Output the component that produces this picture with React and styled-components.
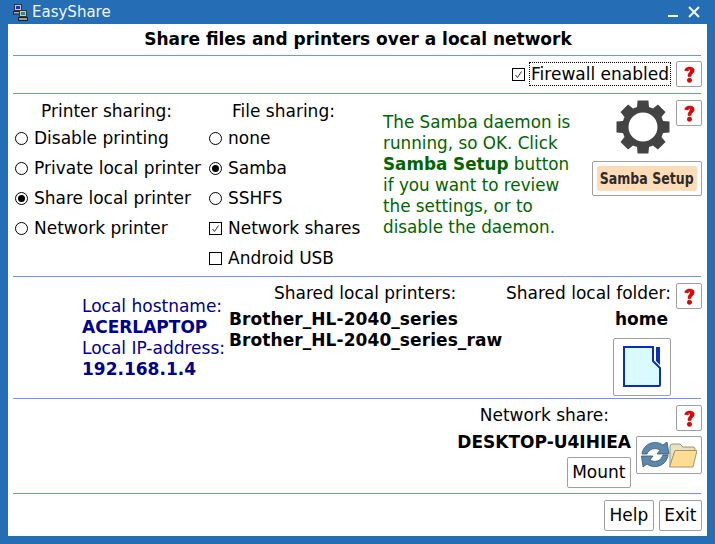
import React from "react";
import styled, { createGlobalStyle } from "styled-components";

const GlobalStyle = createGlobalStyle`
  html, body {
    margin: 0;
    padding: 0;
    background: #256db5;
  }
  body {
    font-family: "DejaVu Sans", sans-serif;
    font-size: 17px;
    color: #000000;
  }
`;

const Window = styled.div`
  width: 715px;
  height: 544px;
  display: flex;
  flex-direction: column;
  background: #256db5;
  overflow: hidden;
`;

const TitleBar = styled.header`
  height: 24px;
  flex: none;
  display: flex;
  align-items: center;
  padding: 0 15px 0 13px;
  color: #f2f6fb;
  font-size: 15px;
`;

const TitleText = styled.span`
  margin-left: 4px;
  flex: 1;
`;

const WindowControls = styled.div`
  display: flex;
  align-items: center;
  gap: 10px;
`;

const Client = styled.main`
  flex: 1;
  margin: 0 8px 8px;
  background: #ffffff;
  padding: 0 6px 0 5px;
  display: flex;
  flex-direction: column;
`;

const Section = styled.section`
  height: ${(p) => p.$height}px;
  flex: none;
  box-sizing: border-box;
  border-bottom: ${(p) => (p.$last ? "none" : "1px solid #7492e8")};
`;

const Heading = styled(Section)`
  display: flex;
  justify-content: center;
  align-items: center;
  font-weight: bold;
  padding: 0 0 2px 2px;
`;

const FirewallRow = styled(Section)`
  display: flex;
  justify-content: flex-end;
  align-items: center;
  padding-bottom: 1px;
`;

const FocusLabel = styled.span`
  border: 1px dotted #000000;
  height: 24px;
  line-height: 22px;
  padding: 0 1px 0 1px;
  margin: 0 5px 0 4px;
  box-sizing: border-box;
  white-space: nowrap;
`;

const HelpButton = styled.button`
  width: 26px;
  height: 26px;
  padding: 0;
  flex: none;
  background: #ffffff;
  border: 1px solid #a0a0a0;
  border-radius: 2px;
  display: flex;
  align-items: center;
  justify-content: center;
`;

const FirewallHelp = styled(HelpButton)`
  margin-right: -1px;
`;

const TextButton = styled.button`
  height: 31px;
  padding: 0 4.5px;
  background: #ffffff;
  border: 1px solid #a0a0a0;
  border-radius: 2px;
  font-family: "DejaVu Sans", sans-serif;
  font-size: 17px;
  color: #000000;
  line-height: 1;
`;

const SharingGrid = styled(Section)`
  display: grid;
  grid-template-columns: 194px 176px 209px 110px;
  padding-top: 6px;
`;

const OptionColumn = styled.div`
  display: flex;
  flex-direction: column;
`;

const ColumnTitle = styled.div`
  height: 23px;
  line-height: 22px;
  padding-left: ${(p) => p.$indent}px;
`;

const OptionRow = styled.label`
  height: 30px;
  display: flex;
  align-items: center;
  gap: 6px;
  white-space: nowrap;
  padding-left: 2px;
`;

const RadioMark = styled.span`
  width: 13px;
  height: 13px;
  flex: none;
  box-sizing: border-box;
  border: 1px solid #000000;
  border-radius: 50%;
  display: flex;
  align-items: center;
  justify-content: center;
  &::after {
    content: "";
    width: 7px;
    height: 7px;
    border-radius: 50%;
    background: ${(p) => (p.$on ? "#000000" : "transparent")};
  }
`;

const CheckMark = styled.span`
  width: 13px;
  height: 13px;
  flex: none;
  box-sizing: border-box;
  border: 1px solid #000000;
  display: flex;
  align-items: center;
  justify-content: center;
`;

const Message = styled.p`
  margin: 12px 0 0;
  color: #006400;
  line-height: 21px;
  font-size: 16.8px;
  white-space: nowrap;
`;

const SetupColumn = styled.div`
  position: relative;
  display: flex;
  flex-direction: column;
  align-items: flex-start;
`;

const GearSlot = styled.div`
  margin-left: 24px;
  height: 61px;
`;

const SetupButton = styled.button`
  width: 110px;
  height: 35px;
  padding: 0;
  background: #ffffff;
  border: 1px solid #a0a0a0;
  border-radius: 2px;
  display: flex;
  align-items: center;
  justify-content: center;
`;

const SetupLabel = styled.span`
  width: 100px;
  height: 25px;
  background: #ffdcb8;
  border-radius: 2px;
  display: flex;
  align-items: center;
  justify-content: center;
`;

const SetupText = styled.span`
  display: inline-block;
  color: #2b2b2b;
  font-family: "DejaVu Sans", sans-serif;
  font-weight: bold;
  font-size: 16.5px;
  white-space: nowrap;
  transform: scaleX(0.76);
`;

const CornerHelp = styled.div`
  position: absolute;
  top: 0;
  right: 0;
`;

const HostGrid = styled(Section)`
  display: grid;
  grid-template-columns: 216px 1fr auto;
  padding-top: 6px;
`;

const HostInfo = styled.div`
  padding: 13px 0 0 69px;
  color: #00008b;
  line-height: 21px;
  white-space: nowrap;
`;

const HostValue = styled.div`
  font-weight: bold;
`;

const PrinterList = styled.div`
  display: flex;
  flex-direction: column;
`;

const PrinterTitle = styled.div`
  height: 26px;
  line-height: 20px;
  padding-left: 45px;
`;

const PrinterName = styled.div`
  font-weight: bold;
  line-height: 21px;
  letter-spacing: 0.08px;
  white-space: nowrap;
`;

const FolderColumn = styled.div`
  display: grid;
  grid-template-columns: auto 26px;
  grid-template-rows: 26px auto auto;
  column-gap: 5px;
  justify-items: end;
  margin-right: -1px;
`;

const FolderTitle = styled.div`
  line-height: 20px;
  white-space: nowrap;
`;

const FolderName = styled.div`
  grid-column: 1;
  font-weight: bold;
  line-height: 20px;
  margin-right: 3px;
`;

const IconButton = styled.button`
  width: ${(p) => p.$w}px;
  height: ${(p) => p.$h}px;
  padding: 0;
  flex: none;
  background: #ffffff;
  border: 1px solid #a0a0a0;
  border-radius: 2px;
  display: flex;
  align-items: center;
  justify-content: center;
`;

const FolderButtonSlot = styled.div`
  grid-column: 1 / 3;
  justify-self: start;
  margin: 6px 0 0 107px;
`;

const ShareSection = styled(Section)`
  display: flex;
  justify-content: flex-end;
  padding-top: 6px;
`;

const ShareColumn = styled.div`
  display: flex;
  flex-direction: column;
  align-items: flex-end;
  margin-right: 5px;
`;

const ShareTitle = styled.div`
  line-height: 22px;
  margin: -1px 22px 0 0;
`;

const ShareHost = styled.div`
  font-weight: bold;
  line-height: 20px;
  margin-top: 6px;
`;

const MountSlot = styled.div`
  margin-top: 5px;
`;

const ShareActions = styled.div`
  display: flex;
  flex-direction: column;
  align-items: flex-end;
  gap: 5px;
  margin-right: -1px;
`;

const Footer = styled(Section)`
  display: flex;
  justify-content: flex-end;
  gap: 5px;
  padding-top: 6px;
  margin-right: -1px;
`;

const AppIcon = () => (
  <svg width="15" height="17" viewBox="0 0 15 17">
    <rect x="1.5" y="0.5" width="7" height="6" fill="#c8c8c8" stroke="#333" />
    <rect x="3" y="2" width="4" height="3" fill="#1c2fe0" />
    <rect x="0.5" y="7.5" width="9" height="2.5" fill="#aaa" stroke="#222" />
    <rect x="6.5" y="6.5" width="7" height="6" fill="#c8c8c8" stroke="#333" />
    <rect x="8" y="8" width="4" height="3" fill="#0f9a90" />
    <rect x="5.5" y="13.5" width="9" height="3" fill="#999" stroke="#222" />
  </svg>
);

const Question = () => (
  <svg width="11" height="17" viewBox="0 0 11 17">
    <path
      d="M0.8 4.6 C0.8 0.2 10.2 -0.4 10.2 4.4 C10.2 7.2 7 7.6 7 10.6 L4 10.6 C3.6 7.2 6.2 6.6 6.2 4.6 C6.2 3.2 4.3 3.2 4.3 5 Z"
      fill="#f00000"
      stroke="#7a0000"
      strokeWidth="0.5"
    />
    <circle cx="5.5" cy="14.2" r="2.2" fill="#f00000" stroke="#7a0000" strokeWidth="0.5" />
  </svg>
);

const Tick = () => (
  <svg width="9" height="9" viewBox="0 0 9 9">
    <path d="M1.5 5 L3.5 7.5 L7.5 1.5" fill="none" stroke="#333" strokeWidth="1" />
  </svg>
);

const gearPath = (() => {
  const cx = 27;
  const cy = 27;
  const teeth = 8;
  const pts = [];
  for (let i = 0; i < teeth; i++) {
    const a = (i * 2 * Math.PI) / teeth - Math.PI / 2;
    const w = 0.2;
    pts.push([a - w * 1.45, 21], [a - w, 27], [a + w, 27], [a + w * 1.45, 21]);
  }
  const d = pts
    .map(([a, r], i) => `${i ? "L" : "M"}${(cx + r * Math.cos(a)).toFixed(1)} ${(cy + r * Math.sin(a)).toFixed(1)}`)
    .join(" ");
  return `${d} Z`;
})();

const Gear = () => (
  <svg width="54" height="54" viewBox="0 0 54 54">
    <path
      d={`${gearPath} M27 12.5 A14.5 14.5 0 1 0 27 41.5 A14.5 14.5 0 1 0 27 12.5 Z`}
      fill="#434343"
      fillRule="evenodd"
    />
  </svg>
);

const FolderIcon = () => (
  <svg width="38" height="41" viewBox="0 0 38 41">
    <path d="M1 1 H30 V15 L37 22 V39 Q37 40 36 40 H1 Z" fill="#d9fbff" stroke="#0a2fc0" strokeWidth="2" />
    <path d="M33 1 H37 V19 L33 15 Z" fill="#0a2fc0" />
  </svg>
);

const MountIcon = () => (
  <svg width="56" height="30" viewBox="0 0 56 30">
    <path d="M29 26 V7 Q29 4 31 4 H39 L42 7 H52 Q54 7 54 9 V11 H34 Z" fill="#e6e0c4" stroke="#9a9470" />
    <path d="M34 10.5 H56 L52 27 H28.5 Z" fill="#ffdc94" stroke="#a89660" />
    <path d="M1 14 C2 4 14 -1 22 5 L26 2 L28 14 L16 14 L19 10 C14 7 8 9 6 14 Z" fill="#5d88ad" stroke="#33566f" strokeWidth="0.8" />
    <path d="M27 15 C26 25 14 30 6 24 L2 27 L0.5 16 L12 16 L9 20 C14 23 20 21 22 15 Z" fill="#5d88ad" stroke="#33566f" strokeWidth="0.8" />
  </svg>
);

const printerOptions = [
  ["Disable printing", false],
  ["Private local printer", false],
  ["Share local printer", true],
  ["Network printer", false],
];

const fileOptions = [
  ["none", "radio", false],
  ["Samba", "radio", true],
  ["SSHFS", "radio", false],
  ["Network shares", "check", true],
  ["Android USB", "check", false],
];

export default function App() {
  return (
    <>
      <GlobalStyle />
      <Window>
        <TitleBar>
          <AppIcon />
          <TitleText>EasyShare</TitleText>
          <WindowControls>
            <svg width="10" height="12" viewBox="0 0 10 12">
              <rect x="0" y="9" width="10" height="2" fill="#f2f6fb" />
            </svg>
            <svg width="12" height="12" viewBox="0 0 12 12">
              <path d="M1 1 L11 11 M11 1 L1 11" stroke="#f2f6fb" strokeWidth="2" />
            </svg>
          </WindowControls>
        </TitleBar>
        <Client>
          <Heading $height={32}>Share files and printers over a local network</Heading>
          <FirewallRow $height={38}>
            <CheckMark>
              <Tick />
            </CheckMark>
            <FocusLabel>Firewall enabled</FocusLabel>
            <FirewallHelp aria-label="help">
              <Question />
            </FirewallHelp>
          </FirewallRow>
          <SharingGrid $height={183}>
            <OptionColumn>
              <ColumnTitle $indent={28}>Printer sharing:</ColumnTitle>
              {printerOptions.map(([label, on]) => (
                <OptionRow key={label}>
                  <RadioMark $on={on} />
                  {label}
                </OptionRow>
              ))}
            </OptionColumn>
            <OptionColumn>
              <ColumnTitle $indent={25}>File sharing:</ColumnTitle>
              {fileOptions.map(([label, kind, on]) => (
                <OptionRow key={label}>
                  {kind === "radio" ? (
                    <RadioMark $on={on} />
                  ) : (
                    <CheckMark>{on && <Tick />}</CheckMark>
                  )}
                  {label}
                </OptionRow>
              ))}
            </OptionColumn>
            <Message>
              The Samba daemon is
              <br />
              running, so OK. Click
              <br />
              <b>Samba Setup</b> button
              <br />
              if you want to review
              <br />
              the settings, or to
              <br />
              disable the daemon.
            </Message>
            <SetupColumn>
              <GearSlot>
                <Gear />
              </GearSlot>
              <SetupButton>
                <SetupLabel>
                  <SetupText>Samba Setup</SetupText>
                </SetupLabel>
              </SetupButton>
              <CornerHelp>
                <HelpButton aria-label="help">
                  <Question />
                </HelpButton>
              </CornerHelp>
            </SetupColumn>
          </SharingGrid>
          <HostGrid $height={122}>
            <HostInfo>
              Local hostname:
              <HostValue>ACERLAPTOP</HostValue>
              Local IP-address:
              <HostValue>192.168.1.4</HostValue>
            </HostInfo>
            <PrinterList>
              <PrinterTitle>Shared local printers:</PrinterTitle>
              <PrinterName>Brother_HL-2040_series</PrinterName>
              <PrinterName>Brother_HL-2040_series_raw</PrinterName>
            </PrinterList>
            <FolderColumn>
              <FolderTitle>Shared local folder:</FolderTitle>
              <HelpButton aria-label="help">
                <Question />
              </HelpButton>
              <FolderName>home</FolderName>
              <div />
              <FolderButtonSlot>
                <IconButton $w={58} $h={58} aria-label="folder">
                  <FolderIcon />
                </IconButton>
              </FolderButtonSlot>
            </FolderColumn>
          </HostGrid>
          <ShareSection $height={95}>
            <ShareColumn>
              <ShareTitle>Network share:</ShareTitle>
              <ShareHost>DESKTOP-U4IHIEA</ShareHost>
              <MountSlot>
                <TextButton>Mount</TextButton>
              </MountSlot>
            </ShareColumn>
            <ShareActions>
              <HelpButton aria-label="help">
                <Question />
              </HelpButton>
              <IconButton $w={66} $h={38} aria-label="mount folder">
                <MountIcon />
              </IconButton>
            </ShareActions>
          </ShareSection>
          <Footer $height={42} $last>
            <TextButton>Help</TextButton>
            <TextButton>Exit</TextButton>
          </Footer>
        </Client>
      </Window>
    </>
  );
}
